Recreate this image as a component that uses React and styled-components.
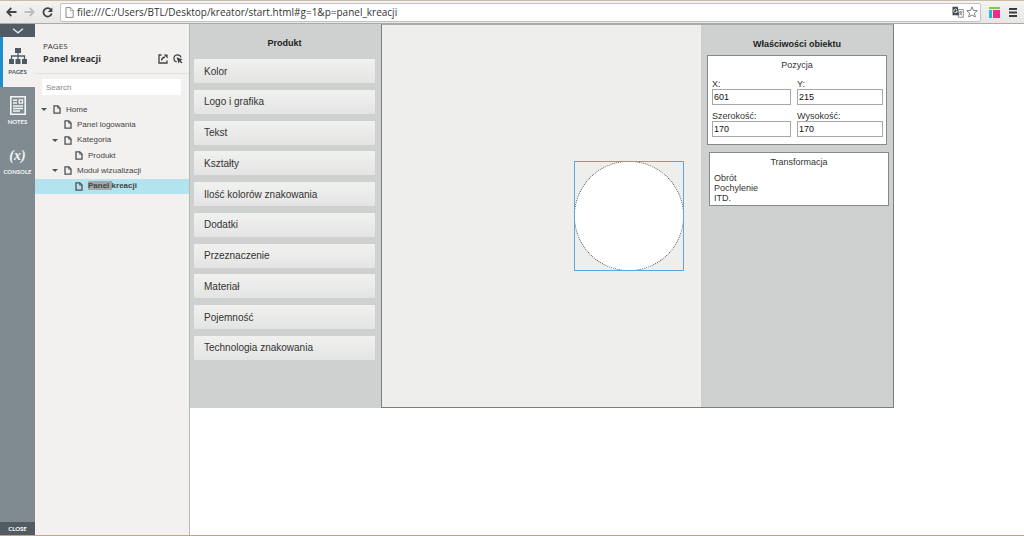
import React, { useState } from "react";
import styled, { createGlobalStyle } from "styled-components";

const CATEGORIES = [
  "Kolor",
  "Logo i grafika",
  "Tekst",
  "Kształty",
  "Ilość kolorów znakowania",
  "Dodatki",
  "Przeznaczenie",
  "Materiał",
  "Pojemność",
  "Technologia znakowania",
];

const PAGES = [
  { name: "Home", level: 0, open: true },
  { name: "Panel logowania", level: 1 },
  { name: "Kategoria", level: 1, open: true },
  { name: "Produkt", level: 2 },
  { name: "Moduł wizualizacji", level: 1, open: true },
  { name: "Panel kreacji", level: 2, match: "Panel" },
];

const BackIcon = () => (
  <svg width="11" height="10" viewBox="0 0 11 10" fill="none" stroke="currentColor" strokeWidth="1.8">
    <path d="M10.5 5H1.5M5.3 1 1.3 5l4 4" />
  </svg>
);

const ForwardIcon = () => (
  <svg width="11" height="10" viewBox="0 0 11 10" fill="none" stroke="currentColor" strokeWidth="1.8">
    <path d="M0.5 5h9M5.7 1l4 4-4 4" />
  </svg>
);

const ReloadIcon = () => (
  <svg width="11" height="11" viewBox="0 0 11 11" fill="none">
    <path d="M9 2.8A4.2 4.2 0 1 0 9.7 6.6" stroke="currentColor" strokeWidth="1.8" />
    <path d="M10.4 0.5v4.6H5.8z" fill="currentColor" />
  </svg>
);

const FileIcon = () => (
  <svg width="9" height="11" viewBox="0 0 9 11" fill="#fff" stroke="#8a8a8a">
    <path d="M1 0.6h4.6L8.2 3.3v7.1H1z" />
    <path d="M5.4 0.6v3h2.8" strokeWidth="0.8" />
  </svg>
);

const PageIcon = () => (
  <svg width="8" height="9" viewBox="0 0 8 9" fill="none" stroke="#4b5258" strokeWidth="1.3">
    <path d="M1 0.8h3.8L7 3v5.2H1z" />
    <path d="M4.6 0.8v2.4H7" strokeWidth="0.8" />
  </svg>
);

const TranslateIcon = () => (
  <svg width="12" height="12" viewBox="0 0 12 12">
    <path d="M5 3.5h6.3v7.8H6.5z" fill="#fff" stroke="#777" strokeWidth="0.8" />
    <path d="M7 6h3.4M8.7 5v1M9.7 6c-.3 1.6-1.2 2.5-2.2 3M7.6 6.6c.5 1.2 1.4 2 2.4 2.5" stroke="#666" strokeWidth="0.7" fill="none" />
    <path d="M0.5 0.8h5.3l1.4 8.4H0.5z" fill="#444b50" />
    <path d="M5 3.9a1.8 1.8 0 1 0 .3 1.4H3.8" stroke="#fff" strokeWidth="0.8" fill="none" />
  </svg>
);

const StarIcon = () => (
  <svg width="12" height="12" viewBox="0 0 12 12" fill="#fff" stroke="#777" strokeWidth="0.9">
    <path d="M6 0.9l1.5 3.5 3.8.3-2.9 2.5.9 3.8L6 9l-3.3 2 .9-3.8L.7 4.7l3.8-.3z" />
  </svg>
);

const ExtensionIcon = () => (
  <svg width="11" height="11" viewBox="0 0 11 11">
    <path d="M0 0h11v2H0z" fill="#8bc53f" />
    <path d="M0 3h3v8H0z" fill="#27b7d6" />
    <path d="M4 3h7v8H4z" fill="#ee2a8f" />
  </svg>
);

const MenuIcon = () => (
  <svg width="8" height="9" viewBox="0 0 8 9" fill="#3c3c3c">
    <path d="M0 0h8v2H0zM0 3.5h8v2H0zM0 7h8v2H0z" />
  </svg>
);

const ChevronIcon = () => (
  <svg width="12" height="6" viewBox="0 0 12 6" fill="none" stroke="#e4e8ea" strokeWidth="1.4">
    <path d="M1 0.8l5 4 5-4" />
  </svg>
);

const SitemapIcon = () => (
  <svg width="18" height="16" viewBox="0 0 18 16" fill="#4f5b63">
    <path d="M6 0h6v5H6zM0 11h5v5H0zM6.5 11h5v5h-5zM13 11h5v5h-5z" />
    <path d="M9 5v6M2.5 11V8h13v3" fill="none" stroke="#4f5b63" strokeWidth="1.3" />
  </svg>
);

const NotesIcon = () => (
  <svg width="16" height="19" viewBox="0 0 16 19" fill="none" stroke="#f4f6f6" strokeWidth="1.6">
    <path d="M0.8 0.8h14.4v17.4H0.8z" />
    <path d="M3 4.2h4M3 7h4M3 10h10M3 12.5h10M3 15h7" strokeWidth="1.4" />
    <path d="M9.2 3.8h3.3v3.4H9.2z" strokeWidth="1.3" />
  </svg>
);

const ShareIcon = () => (
  <svg width="10" height="10" viewBox="0 0 10 10" fill="none" stroke="#3d4347" strokeWidth="1.3">
    <path d="M3.5 1H1v8h8V6.5" />
    <path d="M3.5 6.5C3.8 4.5 5 3.3 7 3" />
    <path d="M5.6 0.4h4V4.600z" fill="#3d4347" stroke="none" />
  </svg>
);

const HighlightIcon = () => (
  <svg width="10" height="10" viewBox="0 0 10 10" fill="none">
    <path d="M3.8 8A3.6 3.6 0 1 1 8 3.5" stroke="#3d4347" strokeWidth="1.2" />
    <path d="M3.5 3.2l6.2 2.4-2.2.9 1.900 2-.9.9-2-1.900-.8 2.200z" fill="#3d4347" />
  </svg>
);

const ObjectProperties = () => {
  const [values, setValues] = useState({ x: "601", y: "215", width: "170", height: "170" });

  const handleChange = (e) => {
    setValues({ ...values, [e.target.name]: e.target.value });
  };

  const fields = [
    { name: "x", label: "X:" },
    { name: "y", label: "Y:" },
    { name: "width", label: "Szerokość:" },
    { name: "height", label: "Wysokość:" },
  ];

  return (
    <Properties>
      <PanelTitle>Właściwości obiektu</PanelTitle>
      <Box>
        <BoxTitle>Pozycja</BoxTitle>
        <Fields>
          {fields.map((field) => (
            <Field key={field.name}>
              {field.label}
              <Input
                type="text"
                name={field.name}
                value={values[field.name]}
                onChange={handleChange}
              />
            </Field>
          ))}
        </Fields>
      </Box>
      <Box $shifted>
        <BoxTitle>Transformacja</BoxTitle>
        <Transforms>
          <li>Obrót</li>
          <li>Pochylenie</li>
          <li>ITD.</li>
        </Transforms>
      </Box>
    </Properties>
  );
};

const App = () => {
  const [url, setUrl] = useState("file:///C:/Users/BTL/Desktop/kreator/start.html#g=1&p=panel_kreacji");
  const [search, setSearch] = useState("");
  const [selected, setSelected] = useState("Panel kreacji");

  return (
    <Window>
      <GlobalStyle />
      <Browser>
        <IconButton aria-label="Back"><BackIcon /></IconButton>
        <IconButton aria-label="Forward" $muted><ForwardIcon /></IconButton>
        <IconButton aria-label="Reload"><ReloadIcon /></IconButton>
        <AddressBar>
          <FileIcon />
          <Address
            type="text"
            aria-label="Address"
            value={url}
            onChange={(e) => setUrl(e.target.value)}
          />
          <IconButton aria-label="Translate" $small><TranslateIcon /></IconButton>
          <IconButton aria-label="Bookmark" $small><StarIcon /></IconButton>
        </AddressBar>
        <IconButton aria-label="Extension"><ExtensionIcon /></IconButton>
        <IconButton aria-label="Menu"><MenuIcon /></IconButton>
      </Browser>

      <Main>
        <Rail>
          <Collapse aria-label="Collapse"><ChevronIcon /></Collapse>
          <RailTab $active>
            <RailIcon><SitemapIcon /></RailIcon>
            PAGES
          </RailTab>
          <RailTab>
            <RailIcon><NotesIcon /></RailIcon>
            NOTES
          </RailTab>
          <RailTab>
            <RailIcon>(x)</RailIcon>
            CONSOLE
          </RailTab>
          <Close>CLOSE</Close>
        </Rail>

        <Sidebar>
          <SidebarHeader>
            <div>
              <Overline>PAGES</Overline>
              <PageName>Panel kreacji</PageName>
            </div>
            <Actions>
              <IconButton aria-label="Share" $small><ShareIcon /></IconButton>
              <IconButton aria-label="Highlight" $small><HighlightIcon /></IconButton>
            </Actions>
          </SidebarHeader>
          <Search
            type="text"
            placeholder="Search"
            aria-label="Search"
            value={search}
            onChange={(e) => setSearch(e.target.value)}
          />
          <Tree>
            {PAGES.map((page) => (
              <TreeItem
                key={page.name}
                $level={page.level}
                $selected={page.name === selected}
                onClick={() => setSelected(page.name)}
              >
                <Arrow $open={page.open} />
                <PageIcon />
                <TreeLink href="#" $selected={page.name === selected}>
                  {page.match ? (
                    <>
                      <mark>{page.match} </mark>
                      {page.name.slice(page.match.length + 1)}
                    </>
                  ) : (
                    page.name
                  )}
                </TreeLink>
              </TreeItem>
            ))}
          </Tree>
        </Sidebar>

        <Prototype>
          <Product>
            <PanelTitle>Produkt</PanelTitle>
            <Categories>
              {CATEGORIES.map((category) => (
                <Category key={category}>{category}</Category>
              ))}
            </Categories>
          </Product>
          <Workspace>
            <Canvas>
              <Selection>
                <Circle />
              </Selection>
            </Canvas>
            <ObjectProperties />
          </Workspace>
        </Prototype>
      </Main>
    </Window>
  );
};

export default App;

const GlobalStyle = createGlobalStyle`
  * {
    box-sizing: border-box;
  }

  body {
    margin: 0;
    background: #fff;
    color: #333;
    font-family: "Liberation Sans", Arial, sans-serif;
    font-size: 9px;
  }

  button, input {
    font-family: inherit;
    color: inherit;
  }

  svg {
    display: block;
    flex: none;
  }
`;

const Window = styled.div`
  display: flex;
  flex-direction: column;
  min-height: 100vh;
  border-bottom: 1px solid #b9a78e;
`;

const Browser = styled.header`
  display: flex;
  align-items: center;
  gap: 7px;
  height: 24px;
  padding: 0 6px;
  background: linear-gradient(#f3f3f2, #e6e6e5);
  border-top: 1px solid #c9bda9;
  border-bottom: 1px solid #a9aaaa;
`;

const IconButton = styled.button`
  display: flex;
  align-items: center;
  justify-content: center;
  width: ${(props) => (props.$small ? "12px" : "11px")};
  height: 14px;
  padding: 0;
  border: none;
  background: none;
  cursor: pointer;
  color: ${(props) => (props.$muted ? "#bdbdbd" : "#444")};
`;

const AddressBar = styled.div`
  display: flex;
  flex: 1;
  align-items: center;
  gap: 2px;
  height: 19px;
  margin-right: 1px;
  padding: 0 2px 0 4px;
  border: 1px solid #c2c2c2;
  border-radius: 2px;
  background: #fff;
`;

const Address = styled.input`
  flex: 1;
  min-width: 0;
  padding: 0 1px;
  border: none;
  outline: none;
  background: none;
  font-family: "Open Sans", "Noto Sans", sans-serif;
  font-size: 10px;
  line-height: 14px;
`;

const Main = styled.div`
  display: flex;
  flex: 1;
`;

const Rail = styled.nav`
  display: flex;
  flex: none;
  flex-direction: column;
  width: 35px;
  background: #808b91;
`;

const Collapse = styled.button`
  display: flex;
  align-items: center;
  justify-content: center;
  height: 13px;
  padding: 0;
  border: none;
  background: #515b63;
`;

const RailTab = styled.button`
  display: flex;
  flex-direction: column;
  align-items: center;
  justify-content: center;
  gap: 3px;
  height: 50px;
  padding: 0 0 2px;
  border: none;
  background: ${(props) => (props.$active ? "#f2f1f0" : "none")};
  box-shadow: ${(props) => (props.$active ? "inset 3px 0 #1c8fd3" : "none")};
  font-family: Lato, sans-serif;
  font-size: 6px;
  font-weight: bold;
  line-height: 8px;
  cursor: pointer;
  && {
    color: ${(props) => (props.$active ? "#4f5b63" : "#f4f6f6")};
  }
`;

const RailIcon = styled.span`
  display: flex;
  align-items: center;
  height: 19px;
  font-family: "Liberation Serif", serif;
  font-size: 14px;
  font-style: italic;
`;

const Close = styled.button`
  height: 13px;
  margin-top: auto;
  padding: 0;
  border: none;
  background: #515b63;
  font-family: Lato, sans-serif;
  font-size: 6px;
  font-weight: bold;
  && {
    color: #fff;
  }
`;

const Sidebar = styled.aside`
  flex: none;
  width: 155px;
  background: #f2f1f0;
  border-right: 1px solid #b5b8b8;
`;

const SidebarHeader = styled.div`
  display: flex;
  align-items: flex-end;
  justify-content: space-between;
  height: 50px;
  padding: 0 5px 7px 8px;
  border-bottom: 1px solid #e0e0df;
  font-family: "Open Sans", sans-serif;
`;

const Overline = styled.div`
  font-size: 8px;
  line-height: 12px;
`;

const PageName = styled.h1`
  margin: 0;
  font-size: 9px;
  font-weight: bold;
  line-height: 14px;
`;

const Actions = styled.div`
  display: flex;
  gap: 3px;
`;

const Search = styled.input`
  display: block;
  width: 139px;
  height: 16px;
  margin: 5px 7px 7px;
  padding: 0 4px;
  border: none;
  background: #fff;
  font-size: 8px;

  &::placeholder {
    color: #888;
  }
`;

const Tree = styled.ul`
  display: flex;
  flex-direction: column;
  height: 92px;
  margin: 0;
  padding: 0;
  list-style: none;
`;

const TreeItem = styled.li`
  display: flex;
  flex: 1;
  align-items: center;
  padding-left: ${(props) => 6 + props.$level * 11}px;
  background: ${(props) => (props.$selected ? "#b3e3ee" : "none")};
`;

const Arrow = styled.span`
  width: 6px;
  margin-right: 6px;
  border: 3px solid transparent;
  border-top-color: ${(props) => (props.$open ? "#4b5258" : "transparent")};
  border-bottom: none;
`;

const TreeLink = styled.a`
  margin-left: 5px;
  color: #444;
  font-size: 8px;
  font-weight: ${(props) => (props.$selected ? "bold" : "normal")};
  line-height: 10px;
  text-decoration: none;
  white-space: pre;

  mark {
    background: #a0a8ab;
    color: inherit;
  }
`;

const Prototype = styled.main`
  display: flex;
  flex: 1;
  align-items: flex-start;
`;

const Product = styled.section`
  flex: none;
  width: 191px;
  height: 384px;
  padding: 13px 6px 0 4px;
  background: #cfd1d0;
`;

const PanelTitle = styled.h2`
  margin: 0;
  color: #222;
  font-size: 9px;
  line-height: 12px;
  text-align: center;
`;

const Categories = styled.div`
  display: flex;
  flex-direction: column;
  justify-content: space-between;
  height: 301px;
  margin-top: 10px;
`;

const Category = styled.button`
  height: 24px;
  padding: 0 10px;
  border: none;
  border-radius: 1px;
  background: linear-gradient(#f1f1f0, #e3e4e3);
  font-size: 10px;
  text-align: left;
  cursor: pointer;
`;

const Workspace = styled.section`
  display: flex;
  flex: none;
  width: 513px;
  height: 384px;
  border: 1px solid #7b7e7e;
  border-top-color: #a9aaaa;
`;

const Canvas = styled.div`
  position: relative;
  flex: 1;
  background: #eeeeed;
`;

const Selection = styled.div`
  position: absolute;
  top: 136px;
  left: 192px;
  width: 110px;
  height: 110px;
  outline: 1px solid #62a4dc;
  outline-offset: -1px;
`;

const Circle = styled.div`
  height: 100%;
  border: 1px dotted #555;
  border-radius: 50%;
  background: #fff;
`;

const Properties = styled.aside`
  width: 192px;
  padding: 13px 6px 0;
  background: #cfd1d0;
`;

const Box = styled.div`
  width: 180px;
  margin: ${(props) => (props.$shifted ? "7px 0 0 2px" : "5px 0 0")};
  padding: ${(props) => (props.$shifted ? "3px 4px 2px" : "3px 4px 7px")};
  border: 1px solid #85898a;
  background: #fff;
`;

const BoxTitle = styled.h3`
  margin: 0;
  font-size: 9px;
  font-weight: normal;
  line-height: 12px;
  text-align: center;
`;

const Fields = styled.div`
  display: grid;
  grid-template-columns: 79px 86px;
  gap: 6px;
  margin-top: 8px;
`;

const Field = styled.label`
  display: block;
  line-height: 10px;
`;

const Input = styled.input`
  display: block;
  width: 100%;
  height: 16px;
  padding: 0 1px;
  border: 1px solid #a5a8aa;
  background: #fff;
  font-size: 9px;
  && {
    color: #111;
  }
`;

const Transforms = styled.ul`
  margin: 5px 0 0;
  padding: 0;
  line-height: 10px;
  list-style: none;
`;
